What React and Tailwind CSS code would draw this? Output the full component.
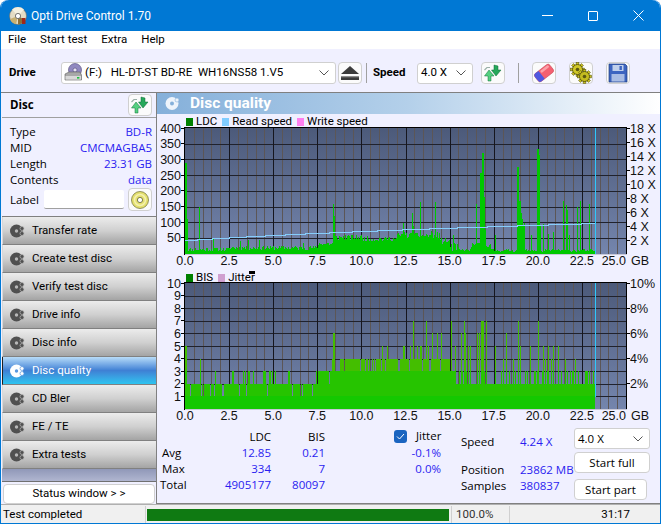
import React from 'react';

const UI = "font-['Roboto',sans-serif]";
const PANEL_FONT = "font-['Open_Sans',sans-serif]";
const BLUE = 'text-[#2a1cf0]';

// small seeded random, so the charts come out the same each run
function makeRandom(seed) {
    let s = seed;
    return () => {
        s = (s * 1664525 + 1013904223) % 4294967296;
        return s / 4294967296;
    };
}

const PX_PER_GB = 441 / 25;
const END_PX = 410;

const LDC_SPIKES = [[0, 290], [1, 290], [2, 110], [14, 150], [28, 48], [55, 40], [63, 45], [74, 45], [118, 35], [148, 160], [149, 120], [158, 30], [172, 30], [196, 40], [203, 50], [218, 100], [219, 70], [228, 88], [250, 165], [268, 60], [300, 75], [310, 62], [335, 62], [346, 60], [358, 95], [363, 65], [368, 70], [227, 130], [235, 166], [246, 72], [252, 70], [291, 160], [295, 258], [296, 258], [297, 320], [298, 320], [299, 180], [332, 275], [333, 275], [334, 170], [335, 170], [336, 130], [337, 110], [339, 100], [352, 334], [353, 334], [354, 315], [355, 90], [378, 170], [381, 155], [382, 140], [384, 60], [392, 150], [395, 170], [404, 160]];

function ldcBase(i, r) {
    const g = i / PX_PER_GB;
    if (g < 2.5) return 9 + r() * 12;
    if (g < 7.5) return 13 + r() * 14;
    if (g < 8.5) return 26 + r() * 14;
    if (g < 10) return 44 + r() * 18;
    if (g < 12) return 40 + r() * 16;
    if (g < 14.4) return 50 + r() * 18;
    if (g < 15) return 32 + r() * 20;
    if (g < 15.5) return 8 + r() * 26;
    if (g < 16.2) return 8 + r() * 8;
    if (g < 17.3) return 22 + r() * 14;
    if (g > 18.8 && g < 19.2) return 70 + r() * 30;
    return 7 + r() * 9;
}

const ldcPath = (() => {
    const r = makeRandom(11);
    const vals = [];
    for (let i = 0; i < END_PX; i++) vals.push(ldcBase(i, r));
    LDC_SPIKES.forEach(([i, v]) => { vals[i] = Math.max(vals[i], v); });
    return vals.map((v, i) => `M${i + 28.5} 130V${(130 - v * 0.315).toFixed(1)}`).join('');
})();

const BIS_SPIKES = [[0, 5], [1, 5], [15, 4], [30, 3], [68, 3], [78, 3], [84, 3], [148, 6], [149, 6], [147, 4], [158, 3], [165, 3], [168, 3], [203, 4], [228, 3], [175, 3], [186, 3], [195, 3], [270, 5], [283, 5], [292, 6], [310, 5], [321, 6], [335, 5], [345, 5], [358, 5], [363, 5], [368, 5], [228, 7], [241, 7], [247, 6], [252, 6], [256, 6], [266, 7], [276, 6], [279, 7], [285, 5], [294, 6], [301, 7], [280, 6], [318, 4], [328, 4], [296, 7], [297, 7], [298, 7], [333, 7], [335, 5], [353, 7], [360, 4], [366, 4], [373, 5], [380, 4], [390, 4]];

function bisBase(i, r) {
    const g = i / PX_PER_GB;
    const x = r();
    if (g < 0.3) return x < 0.5 ? 1 : 2;
    if (g < 2.5) return x < 0.2 ? 1 : 2;
    if (g < 7.5) return x < 0.08 ? 1 : x < 0.88 ? 2 : 3;
    if (g < 8.7) return x < 0.3 ? 2 : x < 0.95 ? 3 : 4;
    if (g < 11) return x < 0.35 ? 3 : 4;
    if (g < 14.4) return x < 0.15 ? 3 : x < 0.9 ? 4 : 5;
    if (g < 15) return x < 0.3 ? 3 : 4;
    if (g < 15.3) return 3;
    return x < 0.75 ? 2 : 3;
}

const bisPaths = (() => {
    const r = makeRandom(29);
    const vals = [];
    for (let i = 0; i < END_PX; i++) vals.push(bisBase(i, r));
    BIS_SPIKES.forEach(([i, v]) => { vals[i] = Math.max(vals[i], v); });
    const high = vals.map((v, i) => `M${i + 28.5} 130V${130 - v * 12.6}`).join('');
    const mid = vals.map((v, i) => `M${i + 28.5} 130V${130 - Math.min(v, 3) * 12.6}`).join('');
    const low = vals.map((v, i) => `M${i + 28.5} 130V${130 - 1 * 12.6}`).join('');
    return { high, mid, low };
})();

const READ_SPEED = 'M28 116H40V115H55V114H72.7V113.3H89V112.3H108V111.3H128V110.3H148.7V109.3H172V108.3H195V107.3H220V106.3H245V105.3H272V104.3H300V103.3H330V102.3H360V101.3H391V100.3H424.6V99.3H438.7';

function PlotGrid({ id }) {
    const minor = [];
    for (let i = 1; i < 50; i++) {
        if (i % 5 !== 0) minor.push(Math.round(28 + i * 8.82) + 0.5);
    }
    return (
        <g shapeRendering="crispEdges">
            <defs>
                <linearGradient id={id} x1="0" y1="0" x2="0" y2="1">
                    <stop offset="0" stopColor="#4c5a7a" />
                    <stop offset="1" stopColor="#7485ad" />
                </linearGradient>
            </defs>
            <rect x="28" y="4" width="441" height="126" fill={`url(#${id})`} />
            {minor.map(x => <line key={x} x1={x} x2={x} y1="4" y2="130" stroke="#5c5656" strokeWidth="1" />)}
        </g>
    );
}

function Frame({ hLines, majorX }) {
    return (
        <g shapeRendering="crispEdges">
            {hLines.map(y => <line key={y} x1="28" x2="469" y1={y + 0.5} y2={y + 0.5} stroke="#20222c" strokeWidth="1" />)}
            {majorX.map(x => <line key={x} x1={x + 0.5} x2={x + 0.5} y1="4" y2="130" stroke="#16161e" strokeWidth="1" />)}
        </g>
    );
}

const MAJOR_X = [2.5, 5, 7.5, 10, 12.5, 15, 17.5, 20, 22.5].map(g => Math.round(28 + g * PX_PER_GB));
const X_LABELS = ['0.0', '2.5', '5.0', '7.5', '10.0', '12.5', '15.0', '17.5', '20.0', '22.5'];

function Axes({ left, right }) {
    return (
        <g fontFamily="'Liberation Sans', sans-serif" fontSize="12.5" fill="#111">
            <g shapeRendering="crispEdges" stroke="#000">
                <line x1="27.5" x2="27.5" y1="3" y2="131" />
                <line x1="469.5" x2="469.5" y1="3" y2="131" />
                <line x1="27" x2="470" y1="3.5" y2="3.5" strokeWidth="1" />
                <line x1="28" x2="470" y1="130.5" y2="130.5" stroke="#c8c8d8" />
                {left.map(([, y]) => <line key={y} x1="24" x2="28" y1={y} y2={y} />)}
                {right.map(([, y]) => <line key={y} x1="469" x2="473" y1={y} y2={y} />)}
            </g>
            {left.map(([t, y]) => <text key={t} x="24" y={y + 4.5} textAnchor="end">{t}</text>)}
            {right.map(([t, y]) => <text key={t} x="473" y={y + 4.5}>{t}</text>)}
            {X_LABELS.map((t, i) => (
                <text key={t} x={28 + i * 44.1} y="141" textAnchor="middle">{t}</text>
            ))}
            <text x="469" y="141" textAnchor="end">25.0</text>
            <text x="474" y="141">GB</text>
        </g>
    );
}

function LdcChart() {
    const left = [400, 350, 300, 250, 200, 150, 100, 50].map((v, i) => [String(v), 4 + i * 15.7]);
    const right = ['18 X', '16 X', '14 X', '12 X', '10 X', '8 X', '6 X', '4 X', '2 X'].map((t, i) => [t, 4 + i * 14]);
    const h = [1, 2, 3, 4, 5, 6, 7].map(i => Math.round(4 + i * 15.7));
    return (
        <svg width="503" height="147" className="block shrink-0 overflow-visible">
            <PlotGrid id="ldcBg" />
            <Frame hLines={h} majorX={MAJOR_X} />
            <path d={ldcPath} stroke="#00c800" strokeWidth="1" fill="none" shapeRendering="crispEdges" />
            <path d={READ_SPEED} stroke="#86cdfb" strokeWidth="1" fill="none" shapeRendering="crispEdges" />
            <line x1="438.5" x2="438.5" y1="4" y2="130" stroke="#30c8f8" shapeRendering="crispEdges" />
            <Axes left={left} right={right} />
        </svg>
    );
}

function BisChart() {
    const left = [10, 9, 8, 7, 6, 5, 4, 3, 2, 1].map((v, i) => [String(v), 4 + i * 12.6]);
    const right = ['10%', '8%', '6%', '4%', '2%'].map((t, i) => [t, 4 + i * 25.2]);
    const h = [1, 2, 3, 4, 5, 6, 7, 8, 9].map(i => Math.round(4 + i * 12.6));
    return (
        <svg width="503" height="147" className="block shrink-0 overflow-visible">
            <PlotGrid id="bisBg" />
            <Frame hLines={h} majorX={MAJOR_X} />
            <g strokeWidth="1" fill="none" shapeRendering="crispEdges">
                <path d={bisPaths.high} stroke="#44be00" />
                <path d={bisPaths.mid} stroke="#26c400" />
                <path d={bisPaths.low} stroke="#14c800" />
            </g>
            <line x1="438.5" x2="438.5" y1="4" y2="118" stroke="#30c8f8" shapeRendering="crispEdges" />
            <Axes left={left} right={right} />
        </svg>
    );
}

function AppDisc() {
    return (
        <svg width="18" height="18" viewBox="0 0 18 18">
            <circle cx="9" cy="9" r="8.5" fill="#e4dcc4" stroke="#6a6a60" strokeWidth="0.6" />
            <path d="M9 9 L3 2.5 A8.5 8.5 0 0 1 15 2.5 Z" fill="#f4f0e0" />
            <path d="M9 9 L16 13 A8.5 8.5 0 0 1 9 17.5 Z" fill="#8c7038" />
            <path d="M9 9 L1 12 A8.5 8.5 0 0 0 7 17.3 Z" fill="#c8b070" />
            <circle cx="9" cy="9" r="2.6" fill="#fff" stroke="#555" strokeWidth="0.8" />
            <rect x="13" y="11" width="3.5" height="6" fill="#a02818" />
        </svg>
    );
}

function DriveIcon() {
    return (
        <svg width="20" height="20" viewBox="0 0 20 20">
            <circle cx="12" cy="7" r="6.5" fill="#9088c0" stroke="#504878" strokeWidth="0.6" />
            <circle cx="12" cy="7" r="2" fill="#e8e4f4" stroke="#504878" strokeWidth="0.6" />
            <path d="M2 11 L6 9 H17 L18.5 12 V17 H2 Z" fill="#a8a8a8" stroke="#606060" strokeWidth="0.6" />
            <rect x="2.5" y="13" width="15.5" height="3.6" fill="#d8d8d8" />
            <rect x="14" y="14" width="2.4" height="1.6" fill="#20c040" />
        </svg>
    );
}

function RefreshIcon() {
    return (
        <svg width="20" height="20" viewBox="0 0 20 20">
            <path d="M11 2 L15 3 L15 7 L18 7 L13 13 L8.5 7 L11 7 Z" fill="#26a85a" stroke="#0f6a36" strokeWidth="0.5" />
            <path d="M8 18 L5 18 L5 13 L1.5 13 L6 7 L11 13 L8 13 Z" fill="#54d080" stroke="#107038" strokeWidth="0.5" />
            <path d="M1.5 7 L4 4.5 L7 4.5" stroke="#9ab0a8" strokeWidth="1.2" fill="none" />
        </svg>
    );
}

function EjectIcon() {
    return (
        <svg width="20" height="16" viewBox="0 0 20 16">
            <path d="M10 1 L19 9 H1 Z" fill="#3c3c3c" />
            <rect x="1" y="11" width="18" height="4" fill="#3c3c3c" />
            <rect x="1" y="11" width="18" height="1.3" fill="#909090" />
        </svg>
    );
}

function EraserIcon() {
    return (
        <svg width="20" height="20" viewBox="0 0 20 20">
            <g transform="rotate(-38 10 10)">
                <rect x="0.5" y="5" width="19" height="10" rx="2.5" fill="#f46070" stroke="#c04858" strokeWidth="0.5" />
                <path d="M7 5 H3 A2.5 2.5 0 0 0 0.5 7.5 V12.5 A2.5 2.5 0 0 0 3 15 H7 Z" fill="#5058e0" />
                <rect x="8" y="6" width="10" height="2.5" rx="1" fill="#fca0a8" />
            </g>
        </svg>
    );
}

function GearsIcon() {
    const teeth = (cx, cy) => [0, 45, 90, 135].map(a => (
        <rect key={a} x={cx - 1.4} y={cy - 7} width="2.8" height="14" fill="#c8c020" stroke="#4c4808" strokeWidth="0.5" transform={`rotate(${a} ${cx} ${cy})`} />
    ));
    return (
        <svg width="22" height="22" viewBox="0 0 22 22">
            {teeth(7.5, 7.5)}
            <circle cx="7.5" cy="7.5" r="5" fill="#d0c828" stroke="#4c4808" strokeWidth="0.8" />
            <circle cx="7.5" cy="7.5" r="1.8" fill="#5c5810" />
            {teeth(14.5, 14.5)}
            <circle cx="14.5" cy="14.5" r="5" fill="#c4bc20" stroke="#4c4808" strokeWidth="0.8" />
            <circle cx="14.5" cy="14.5" r="1.8" fill="#5c5810" />
        </svg>
    );
}

function FloppyIcon() {
    return (
        <svg width="20" height="20" viewBox="0 0 20 20">
            <path d="M1 1 H17 L19 3 V19 H1 Z" fill="#3c64c0" stroke="#203c80" strokeWidth="0.7" />
            <rect x="4.5" y="2" width="11" height="6" fill="#c0d0ec" />
            <rect x="11.5" y="3" width="2.4" height="4" fill="#3c64c0" />
            <rect x="3.5" y="11" width="13" height="7.5" fill="#a8bce4" />
        </svg>
    );
}

function CdIcon() {
    return (
        <svg width="18" height="18" viewBox="0 0 18 18">
            <circle cx="9" cy="9" r="8.5" fill="#e4e070" stroke="#6c6c30" strokeWidth="0.7" />
            <circle cx="9" cy="9" r="5.5" fill="none" stroke="#f4f0b0" strokeWidth="1.5" />
            <circle cx="9" cy="9" r="2.6" fill="#fff" stroke="#606030" strokeWidth="0.8" />
        </svg>
    );
}

function ModeIcon({ active }) {
    const c = active ? '#ffffff' : '#505050';
    const hole = active ? '#5a98e0' : '#b8b8b8';
    return (
        <svg width="16" height="14" viewBox="0 0 16 14">
            <circle cx="6.5" cy="7" r="6.5" fill={c} />
            <circle cx="6.5" cy="7" r="1.7" fill={hole} />
            <circle cx="12" cy="4.5" r="2" fill={c} stroke={hole} strokeWidth="0.7" />
            <circle cx="12" cy="9.5" r="2" fill={c} stroke={hole} strokeWidth="0.7" />
        </svg>
    );
}

function Chevron() {
    return (
        <svg width="10" height="6" viewBox="0 0 10 6" className="shrink-0">
            <path d="M0.5 0.5 L5 5 L9.5 0.5" fill="none" stroke="#555" strokeWidth="1" />
        </svg>
    );
}

function ToolButton({ children, className = '' }) {
    return (
        <div className={`w-[24px] h-[22px] flex items-center justify-center bg-[#fbfbfb] border border-[#d0d0d0] rounded-[4px] shrink-0 ${className}`}>
            {children}
        </div>
    );
}

function TitleBar() {
    return (
        <div className="h-[31px] shrink-0 bg-[#0078d4] rounded-t-[8px] flex items-center text-white">
            <div className="ml-[8px] mr-[4px]"><AppDisc /></div>
            <span className="text-[12px]">Opti Drive Control 1.70</span>
            <div className="ml-auto flex items-center mr-[16px] gap-[35px]">
                <div className="w-[11px] h-px bg-white" />
                <div className="w-[10px] h-[10px] border border-white rounded-[1px]" />
                <svg width="11" height="11" viewBox="0 0 11 11"><path d="M0.5 0.5 L10.5 10.5 M10.5 0.5 L0.5 10.5" stroke="#fff" strokeWidth="1" /></svg>
            </div>
        </div>
    );
}

function MenuBar() {
    return (
        <div className="h-[18px] shrink-0 bg-white flex items-center pl-[7px] gap-[14px] text-[11.5px] text-black">
            <span>File</span>
            <span>Start test</span>
            <span>Extra</span>
            <span>Help</span>
        </div>
    );
}

function Toolbar() {
    return (
        <div className="h-[44px] shrink-0 bg-[#f0f0ff] border-b border-[#808080] flex items-center pt-[5px] text-[11.5px] text-black">
            <span className="ml-[8px] w-[52px] font-bold">Drive</span>
            <div className="w-[275px] h-[22px] bg-white border border-[#d0d0d0] rounded-[3px] flex items-center pr-[6px] mr-[2px]">
                <div className="ml-[1px] mr-[2px]"><DriveIcon /></div>
                <span className="whitespace-pre text-[11.5px]">(F:)   HL-DT-ST BD-RE  WH16NS58 1.V5</span>
                <div className="ml-auto"><Chevron /></div>
            </div>
            <ToolButton><EjectIcon /></ToolButton>
            <div className="w-px h-[20px] bg-[#a0a0a0] ml-[4px] mr-[6px]" />
            <span className="font-bold w-[44px]">Speed</span>
            <div className="w-[56px] h-[21px] bg-white border border-[#d0d0d0] rounded-[3px] flex items-center pl-[3px] pr-[6px]">
                <span>4.0 X</span>
                <div className="ml-auto"><Chevron /></div>
            </div>
            <ToolButton className="ml-[8px]"><RefreshIcon /></ToolButton>
            <div className="w-px h-[20px] bg-[#a0a0a0] ml-[13px] mr-[13px]" />
            <ToolButton className="mr-[13px]"><EraserIcon /></ToolButton>
            <ToolButton className="mr-[13px]"><GearsIcon /></ToolButton>
            <ToolButton><FloppyIcon /></ToolButton>
        </div>
    );
}

function InfoRow({ label, value }) {
    return (
        <div className="h-[16px] flex items-center justify-between">
            <span className="text-black">{label}</span>
            <span className={BLUE}>{value}</span>
        </div>
    );
}

function DiscPanel() {
    return (
        <div className={`h-[123px] shrink-0 text-[11.5px] ${PANEL_FONT}`}>
            <div className="h-[25px] flex items-center border-b border-[#a0a0a0] pl-[8px] pr-[4px]">
                <span className="font-bold text-black">Disc</span>
                <ToolButton className="ml-auto"><RefreshIcon /></ToolButton>
            </div>
            <div className="pl-[8px] pr-[4px] pt-[6px]">
                <InfoRow label="Type" value="BD-R" />
                <InfoRow label="MID" value="CMCMAGBA5" />
                <InfoRow label="Length" value="23.31 GB" />
                <InfoRow label="Contents" value="data" />
                <div className="flex items-center">
                    <span className="text-black w-[34px]">Label</span>
                    <div className="w-[80px] h-[19px] bg-white border-b border-[#a0a0a0] rounded-[2px]" />
                    <ToolButton className="ml-auto h-[23px]"><CdIcon /></ToolButton>
                </div>
            </div>
        </div>
    );
}

function ModeButton({ label, active }) {
    const skin = active
        ? 'bg-gradient-to-b from-[#b8dcf8] via-[#3f80d4] to-[#2cc4f0] text-white border-l-[#202020]'
        : 'bg-gradient-to-b from-[#ececec] via-[#d0d0d0] to-[#a4a4a4] text-black border-l-[#d8d8d8]';
    return (
        <div className={`h-[28px] shrink-0 flex items-center pl-[7px] border-b border-b-[#808080] border-l ${skin}`}>
            <ModeIcon active={active} />
            <span className="ml-[6px] text-[11.5px]">{label}</span>
        </div>
    );
}

function Sidebar() {
    const modes = ['Transfer rate', 'Create test disc', 'Verify test disc', 'Drive info', 'Disc info', 'Disc quality', 'CD Bler', 'FE / TE', 'Extra tests'];
    return (
        <div className="w-[155px] shrink-0 flex flex-col bg-[#f0f0ff] pl-[1px]">
            <DiscPanel />
            <div className="border-t border-[#808080]">
                {modes.map(m => <ModeButton key={m} label={m} active={m === 'Disc quality'} />)}
            </div>
            <div className="h-[13px] shrink-0 bg-gradient-to-b from-[#9098b8] to-[#b0b6d0] border-b border-[#707070]" />
            <div className="h-[20px] mt-[2px] mx-[1px] bg-white border border-[#d0d0d0] rounded-[4px] flex items-center justify-center text-[11.5px] text-black">
                Status window &gt; &gt;
            </div>
        </div>
    );
}

function StatRow({ label, ldc, bis, labelClass = '' }) {
    return (
        <div className="h-[16px] flex items-center">
            <span className={`w-[36px] text-black ${labelClass}`}>{label}</span>
            <span className={`w-[73px] text-right ${BLUE}`}>{ldc}</span>
            <span className={`w-[54px] text-right ${BLUE}`}>{bis}</span>
        </div>
    );
}

function Stats() {
    return (
        <div className={`flex text-[11.5px] h-[75px] ${PANEL_FONT}`}>
            <div className="w-[237px] pl-[5px] pt-[6px]">
                <div className="h-[16px] flex items-center text-black">
                    <span className="w-[109px] text-right">LDC</span>
                    <span className="w-[54px] text-right">BIS</span>
                </div>
                <StatRow label="Avg" ldc="12.85" bis="0.21" />
                <StatRow label="Max" ldc="334" bis="7" />
                <StatRow label="Total" ldc="4905177" bis="80097" labelClass="-ml-[2px] mr-[2px]" />
            </div>
            <div className="w-[66px] pt-[5px]">
                <div className="h-[16px] flex items-center">
                    <div className="w-[13px] h-[13px] rounded-[3px] bg-[#1a64c0] flex items-center justify-center">
                        <svg width="9" height="7" viewBox="0 0 9 7"><path d="M1 3.5 L3.5 6 L8 1" fill="none" stroke="#fff" strokeWidth="1" /></svg>
                    </div>
                    <span className="ml-[9px] text-black">Jitter</span>
                </div>
                <div className={`h-[16px] pr-[19px] text-right ${BLUE}`}>-0.1%</div>
                <div className={`h-[16px] pr-[19px] text-right ${BLUE}`}>0.0%</div>
            </div>
            <div className="w-[114px] pt-[8px] pl-[1px]">
                <div className="h-[16px] flex items-center mt-[3px]"><span className="w-[59px] text-black">Speed</span><span className={BLUE}>4.24 X</span></div>
                <div className="h-[12px]" />
                <div className="h-[16px] flex items-center"><span className="w-[59px] text-black">Position</span><span className={`${BLUE} whitespace-nowrap`}>23862 MB</span></div>
                <div className="h-[16px] flex items-center"><span className="w-[59px] text-black">Samples</span><span className={BLUE}>380837</span></div>
            </div>
            <div className="w-[76px] flex flex-col pt-[5px] text-black">
                <div className="h-[21px] shrink-0 bg-white border border-[#d0d0d0] rounded-[3px] flex items-center pl-[3px] pr-[6px]">
                    4.0 X
                    <div className="ml-auto"><Chevron /></div>
                </div>
                <div className="h-[21px] shrink-0 mt-[3px] bg-white border border-[#d0d0d0] rounded-[4px] flex items-center justify-center">Start full</div>
                <div className="h-[21px] shrink-0 mt-[6px] w-[73px] bg-white border border-[#d0d0d0] rounded-[4px] flex items-center justify-center">Start part</div>
            </div>
        </div>
    );
}

function Legend({ items }) {
    return (
        <div className="h-[14px] flex items-center pl-[29px] text-[11.5px] text-black relative">
            {items.map(([label, color]) => (
                <span key={label} className="flex items-center mr-[5px]">
                    <span className={`w-[7px] h-[8px] mr-[3px] ${color}`} />
                    {label}
                </span>
            ))}
        </div>
    );
}

function MainPanel() {
    return (
        <div className="flex-1 min-w-0 flex flex-col bg-[#f0f0ff] border-l border-[#808080] border-b overflow-hidden">
            <div className="h-[21px] shrink-0 bg-gradient-to-r from-[#85b0da] via-[#b4d0ea] to-white flex items-center pl-[8px]">
                <svg width="15" height="15" viewBox="0 0 15 15">
                    <circle cx="7" cy="7.5" r="6.5" fill="#eef4fb" />
                    <circle cx="7" cy="7.5" r="2" fill="#85b0da" />
                    <circle cx="12" cy="4" r="2" fill="#eef4fb" stroke="#85b0da" strokeWidth="0.6" />
                </svg>
                <span className="ml-[10px] text-white font-bold text-[15.5px]">Disc quality</span>
            </div>
            <div className="mt-[1px] shrink-0"><Legend items={[['LDC', 'bg-[#008000]'], ['Read speed', 'bg-[#80ccff]'], ['Write speed', 'bg-[#ff80f0]']]} /></div>
            <div className="-mt-[5px] shrink-0"><LdcChart /></div>
            <div className="relative shrink-0">
                <Legend items={[['BIS', 'bg-[#008000]'], ['Jitter', 'bg-[#d0a0d0]']]} />
                <div className="absolute left-[92px] top-0 w-[6px] h-[3px] bg-black" />
            </div>
            <div className="-mt-[6px] shrink-0"><BisChart /></div>
            <div className="-mt-[3px] shrink-0"><Stats /></div>
        </div>
    );
}

function StatusBar() {
    return (
        <div className="h-[19px] shrink-0 bg-[#f0f0f0] border-t border-[#b0b0b0] flex items-center pt-[1px] text-[11.5px] text-black">
            <span className="w-[144px] pl-[2px] whitespace-nowrap">Test completed</span>
            <div className="w-px h-full bg-[#d0d0d0]" />
            <div className="w-[302px] h-[12px] ml-[1px] bg-[#0f7a12]" />
            <div className="w-px h-full bg-[#d0d0d0] ml-[2px]" />
            <span className="ml-[4px] w-[53px] text-[#333]">100.0%</span>
            <div className="w-px h-full bg-[#d0d0d0]" />
            <span className="ml-auto mr-[30px]">31:17</span>
        </div>
    );
}

export default function App() {
    return (
        <div className={`w-[661px] h-[524px] overflow-hidden bg-white ${UI}`}>
            <div className="h-full flex flex-col rounded-t-[8px] border-x border-b border-[#0078d4] bg-[#f0f0ff]">
                <TitleBar />
                <MenuBar />
                <Toolbar />
                <div className="flex flex-1 min-h-0">
                    <Sidebar />
                    <MainPanel />
                </div>
                <StatusBar />
            </div>
        </div>
    );
}
